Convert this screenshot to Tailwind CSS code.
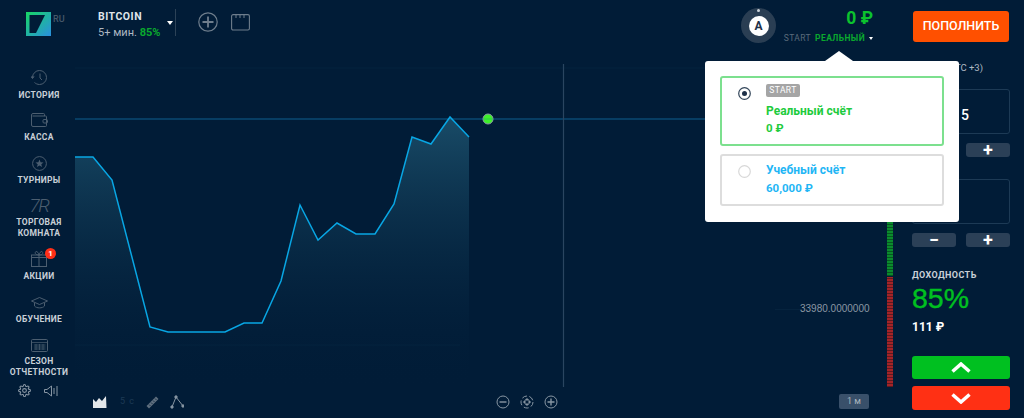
<!DOCTYPE html>
<html lang="en">
<head>
  <meta charset="UTF-8">
  <title>Binomo</title>
  <script src="https://cdn.jsdelivr.net/npm/@tailwindcss/browser@4"></script>
</head>
<body class="bg-[#011c37] font-['Roboto','Noto_Sans',sans-serif] overflow-hidden">
  <div class="relative w-[1024px] h-[418px] flex flex-col text-[#d5dbe1]">

    <!-- top bar -->
    <header class="h-[60px] flex items-start shrink-0">
      <div class="w-[98px] pl-[26px] pt-[12px] flex items-start shrink-0">
        <svg width="25" height="24" viewBox="0 0 25 24">
          <defs><linearGradient id="logo" x1="0" y1="0" x2="1" y2="1"><stop offset="0" stop-color="#17d764"/><stop offset="1" stop-color="#2a8fe0"/></linearGradient></defs>
          <rect width="25" height="24" fill="url(#logo)"/>
          <path d="M3.500 3H19L10 21H3.500Z" fill="#011c37"/>
        </svg>
        <span class="ml-[2px] mt-[1px] text-[9px] font-medium text-[#46586a]">RU</span>
      </div>
      <div class="w-[69px] pt-[9px] shrink-0">
        <div class="text-[10.5px] font-bold tracking-[0.5px] leading-[15px] text-[#dfe4e9]">BITCOIN</div>
        <div class="text-[11px] leading-[17px] whitespace-nowrap text-[#aeb8c2]">5+ мин. <span class="font-bold text-[#0aa82e]">85%</span></div>
      </div>
      <div class="w-[6px] mt-[21px] h-0 border-x-[3px] border-t-[4px] border-x-transparent border-t-white shrink-0"></div>
      <div class="ml-[2px] mt-[9px] w-[1px] h-[27px] bg-[#2c4257] shrink-0"></div>
      <svg class="ml-[22px] mt-[12px] shrink-0" width="20" height="20" viewBox="0 0 20 20" fill="none" stroke="#6e7d8c">
        <circle cx="10" cy="10" r="9.200" stroke-width="1.200"/>
        <path d="M10 4.500V15.500M4.500 10H15.500" stroke-width="1.800"/>
      </svg>
      <svg class="ml-[13px] mt-[14px] shrink-0" width="19" height="17" viewBox="0 0 19 17" fill="none" stroke="#6e7d8c">
        <rect x=".6" y=".6" width="17.800" height="15.400" rx="1.500" stroke-width="1.100"/>
        <path d="M5 1V4M9 1V4M13 1V4" stroke-width="1"/>
      </svg>
      <div class="flex-1"></div>
      <div class="relative w-[35px] h-[35px] mt-[8px] rounded-full bg-[#2a3e53] flex items-center justify-center shrink-0">
        <span class="absolute top-[1px] left-[16px] w-[3px] h-[3px] rounded-full bg-[#cfd6dc]"></span>
        <span class="w-[20px] h-[20px] rounded-full bg-white flex items-center justify-center text-[12px] font-bold text-[#1d3048]">A</span>
      </div>
      <div class="w-[90px] ml-[6px] pt-[7px] shrink-0 text-right">
        <div class="text-[17.500px] leading-[22px] font-bold text-[#0cc22e] -mr-[1px]">0 ₽</div>
        <div class="mt-[3px] flex items-center justify-end text-[8.5px] leading-[12px] tracking-[0.4px] whitespace-nowrap">
          <span class="text-[#5a6b7b]">START</span>
          <span class="ml-[4px] font-bold text-[#0aa82e]">РЕАЛЬНЫЙ</span>
          <span class="ml-[4px] mr-[-1px] w-0 h-0 border-x-[2px] border-t-[3px] border-x-transparent border-t-white"></span>
        </div>
      </div>
      <button class="ml-[41px] mr-[15px] mt-[11px] w-[96px] h-[31px] rounded-[3px] bg-[#ff5000] text-white text-[12.5px] font-medium shrink-0">ПОПОЛНИТЬ</button>
    </header>

    <main class="flex-1 flex min-h-0">
      <!-- left menu -->
      <aside class="w-[75px] pl-[3px] shrink-0 flex flex-col items-center text-[8.5px] font-bold tracking-[0.3px] leading-[11px] text-center text-[#c9d0d7]">
        <svg class="mt-[9px]" width="17" height="17" viewBox="0 0 17 17" fill="none" stroke="#4c5e70" stroke-width="1">
          <path d="M1.500 8.500A7 7 0 1 1 8.500 15.500C6.500 15.500 4.500 14.500 3.500 13.500"/><path d="M9 4.500V9L11 11"/><path d="M0 7.500L1.500 9.500L3 7.500" fill="#4c5e70"/>
        </svg>
        <div class="mt-[4px]">ИСТОРИЯ</div>
        <svg class="mt-[12px]" width="17" height="14" viewBox="0 0 17 14" fill="none" stroke="#4c5e70" stroke-width="1">
          <path d="M13.500 3V1.500Q13.500 .5 12.500 .5H2Q.5 .5 .5 2V12Q.5 13.500 2 13.500H14.500Q15.500 13.500 15.500 12.500V3.500Q15.500 3 14.500 3H1.500"/><rect x="12" y="6.500" width="4.500" height="3.500" rx="1"/>
        </svg>
        <div class="mt-[5px]">КАССА</div>
        <svg class="mt-[13px]" width="15" height="15" viewBox="0 0 15 15" fill="none">
          <circle cx="7.500" cy="7.500" r="6.900" stroke="#4c5e70"/>
          <path d="M7.500 3.500L8.600 6.200L11.500 6.400L9.300 8.300L10 11.100L7.500 9.600L5 11.100L5.700 8.300L3.500 6.400L6.400 6.200Z" fill="#4c5e70"/>
        </svg>
        <div class="mt-[4px]">ТУРНИРЫ</div>
        <div class="mt-[12px] text-[19px] leading-[15px] font-light italic tracking-[-1.500px] text-[#4c5e70]">7R</div>
        <div class="mt-[4px]">ТОРГОВАЯ<br>КОМНАТА</div>
        <div class="relative mt-[14px] h-[15px]">
          <svg width="16" height="17" viewBox="0 0 16 17" fill="none" stroke="#4c5e70" stroke-width="1" class="-mt-[3px]">
            <rect x=".5" y="5" width="15" height="11.500"/><path d="M0 7.500H16M8 5V17M8 5C5 5 3.500 3.500 4.500 2S7.500 2.500 8 5C8.500 2.500 10.500 .5 11.500 2S11 5 8 5"/>
          </svg>
          <span class="absolute -top-[5px] left-[14px] w-[11px] h-[11px] rounded-full bg-[#ff2f17] text-white text-[8px] leading-[11px] font-bold tracking-normal">1</span>
        </div>
        <div class="mt-[3px]">АКЦИИ</div>
        <svg class="mt-[15px]" width="17" height="12" viewBox="0 0 17 12" fill="none" stroke="#4c5e70" stroke-width="1">
          <path d="M.5 4L8.500 .5L16.500 4L8.500 7.500Z"/><path d="M3.500 6V9C5.500 11.500 11.500 11.500 13.500 9V6"/>
        </svg>
        <div class="mt-[5px]">ОБУЧЕНИЕ</div>
        <svg class="mt-[14px]" width="17" height="13" viewBox="0 0 17 13" fill="none" stroke="#4c5e70" stroke-width="1">
          <rect x=".5" y=".5" width="16" height="12" rx="1"/><path d="M.5 3.500H16.500M3 6H14.500M3 8H14.500M3 10H14.500M5 5V11M8.500 5V11M12 5V11" stroke-width=".7"/>
        </svg>
        <div class="mt-[4px]">СЕЗОН<br>ОТЧЕТНОСТИ</div>
        <div class="mt-[6px] -ml-[3px] flex items-center gap-[13px]">
          <svg width="13" height="13" viewBox="0 0 24 24" fill="none" stroke="#8795a3" stroke-width="2">
            <circle cx="12" cy="12" r="3.500"/><path d="M19.400 15a1.650 1.650 0 0 0 .33 1.820l.06.06a2 2 0 1 1-2.830 2.830l-.06-.06a1.650 1.650 0 0 0-2.800 1.170V21a2 2 0 1 1-4 0v-.09a1.650 1.650 0 0 0-2.800-1.170l-.06.06a2 2 0 1 1-2.830-2.830l.06-.06a1.650 1.650 0 0 0-1.170-2.800H3a2 2 0 1 1 0-4h.09a1.650 1.650 0 0 0 1.170-2.800l-.06-.06a2 2 0 1 1 2.830-2.830l.06.06a1.650 1.650 0 0 0 2.800-1.170V3a2 2 0 1 1 4 0v.09a1.650 1.650 0 0 0 2.800 1.170l.06-.06a2 2 0 1 1 2.830 2.830l-.06.06a1.650 1.650 0 0 0 1.170 2.800H21a2 2 0 1 1 0 4h-.09a1.650 1.650 0 0 0-1.510 1z"/>
          </svg>
          <svg width="14" height="12" viewBox="0 0 14 12" fill="none" stroke="#8795a3" stroke-width="1">
            <path d="M.5 4.500V7.500H3L7.500 11V1L3 4.500Z"/><path d="M10 3V9M13 1V11"/>
          </svg>
        </div>
      </aside>

      <!-- chart canvas -->
      <section class="relative flex-1 min-w-0">
        <svg class="absolute inset-0" width="830" height="358" viewBox="75 60 830 358" fill="none">
          <defs>
            <linearGradient id="area" x1="0" y1="0" x2="0" y2="1"><stop offset="0" stop-color="#1d5470" stop-opacity=".85"/><stop offset="1" stop-color="#011c37" stop-opacity="0"/></linearGradient>
            <pattern id="volGreen" width="6" height="3" patternUnits="userSpaceOnUse"><rect width="6" height="2" fill="#0b8a2e"/></pattern>
            <pattern id="volRed" width="6" height="3" patternUnits="userSpaceOnUse"><rect width="6" height="2" fill="#a32428"/></pattern>
          </defs>
          <path d="M75 68H895M75 345H460" stroke="#05233f" stroke-width="1"/>
          <path d="M75 157H93L112 180L150 327L168 332H225L244 323H262L281 281L300 205L318 240L337 223L356 234H375L394 204L412 137L431 144L450 117L469 137V388H75Z" fill="url(#area)"/>
          <path d="M75 119H895" stroke="#0e5f90" stroke-width="1.200"/>
          <path d="M563.500 64V387" stroke="#2a4560" stroke-width="1.200"/>
          <path d="M75 157H93L112 180L150 327L168 332H225L244 323H262L281 281L300 205L318 240L337 223L356 234H375L394 204L412 137L431 144L450 117L469 137" stroke="#08a6e4" stroke-width="1.500"/>
          <circle cx="488" cy="119" r="5" fill="#3df02a" stroke="#8d9ba5" stroke-width="1"/>
          <path d="M483 119H493" stroke="#2fc84a"/>
          <path d="M775 309.500H870" stroke="#06233e"/>
          <rect x="887" y="222" width="6" height="54" fill="#07561f"/>
          <rect x="887" y="222" width="6" height="54" fill="url(#volGreen)"/>
          <rect x="887" y="277" width="6" height="110" fill="#5e1a20"/>
          <rect x="887" y="277" width="6" height="110" fill="url(#volRed)"/>
        </svg>
        <span class="absolute left-[725px] top-[243px] text-[10px] leading-[12px] font-['Liberation_Sans',sans-serif] text-[#8a97a3] bg-[#011c37]">33980.0000000</span>

        <!-- bottom tools -->
        <div class="absolute left-[18px] bottom-[9px] flex items-center">
          <svg width="14" height="12" viewBox="0 0 14 12"><path d="M0 12V3L3 6L6 2L9 5L13 0L13.500 12Z" fill="#e3e7ea"/></svg>
          <span class="ml-[13px] text-[9px] tracking-[1px] text-[#1d3a55]">5 с</span>
          <svg class="ml-[11px]" width="13" height="13" viewBox="0 0 13 13" fill="#5f6f7f"><path d="M.5 10L10 .5L12.500 3L3 12.500Z"/><path d="M3 8.500L4.500 10M5 6.500L6.500 8M7 4.500L8.500 6M9 2.500L10.500 4" stroke="#011c37" stroke-width=".7"/></svg>
          <svg class="ml-[11px]" width="14" height="14" viewBox="0 0 14 14" fill="none" stroke="#8896a3" stroke-width="1"><path d="M2 12L6 2L13 11"/><circle cx="6" cy="2" r="1.200" fill="#8896a3"/><circle cx="2" cy="12" r="1.200" fill="#8896a3"/><circle cx="13" cy="11" r="1.200" fill="#8896a3"/></svg>
        </div>
        <div class="absolute left-[421px] bottom-[9px] flex items-center gap-[10px]">
          <svg width="14" height="14" viewBox="0 0 14 14" fill="none" stroke="#8896a3"><circle cx="7" cy="7" r="6"/><path d="M3.500 7H10.500" stroke-width="1.400"/></svg>
          <svg width="14" height="14" viewBox="0 0 14 14" fill="none" stroke="#8896a3"><circle cx="7" cy="7" r="6" stroke-dasharray="5 2.500"/><path d="M7 3.500L8.500 5H5.500ZM7 10.500L8.500 9H5.500ZM3.500 7L5 5.500V8.500ZM10.500 7L9 5.500V8.500Z" fill="#8896a3"/></svg>
          <svg width="14" height="14" viewBox="0 0 14 14" fill="none" stroke="#8896a3"><circle cx="7" cy="7" r="6"/><path d="M3.500 7H10.500M7 3.500V10.500" stroke-width="1.400"/></svg>
        </div>
        <div class="absolute left-[764px] bottom-[9px] w-[30px] h-[15px] rounded-[2px] bg-[#39506a] text-[9px] leading-[15px] text-center text-[#aab5bf]">1 м</div>
      </section>

      <!-- right panel -->
      <aside class="w-[114px] pr-[14px] pl-[2px] shrink-0 flex flex-col text-white">
        <div class="mt-[2px] h-[12px] text-[9.5px] leading-[12px] text-[#aeb8c2] text-right pr-[27px]">(UTC +3)</div>
        <div class="mt-[15px] h-[45px] pt-[8px] rounded-[3px] border border-[#1d3a55] flex items-center justify-center text-[14px] font-medium">15</div>
        <div class="mt-[9px] flex justify-between">
          <button class="w-[44px] h-[14px] rounded-[3px] bg-[#2b4057] text-[18px] leading-[14px] font-bold">−</button>
          <button class="w-[44px] h-[14px] rounded-[3px] bg-[#2b4057] text-[18px] leading-[14px] font-bold">+</button>
        </div>
        <div class="mt-[22px] h-[45px] rounded-[3px] border border-[#1d3a55]"></div>
        <div class="mt-[9px] flex justify-between">
          <button class="w-[44px] h-[14px] rounded-[3px] bg-[#2b4057] text-[18px] leading-[14px] font-bold">−</button>
          <button class="w-[44px] h-[14px] rounded-[3px] bg-[#2b4057] text-[18px] leading-[14px] font-bold">+</button>
        </div>
        <div class="mt-[22px] text-[9px] leading-[12px] font-bold tracking-[0.4px] text-[#c9d0d7]">ДОХОДНОСТЬ</div>
        <div class="mt-[3px] text-[28.500px] leading-[28px] font-['Liberation_Sans',sans-serif] text-[#00c020] [-webkit-text-stroke:0.4px_#00c020]">85%</div>
        <div class="mt-[8px] text-[12px] leading-[15px] font-bold">111 ₽</div>
        <button class="mt-[21px] h-[23px] rounded-[3px] bg-[#00c020] flex items-center justify-center">
          <svg width="20" height="11" viewBox="0 0 20 11" fill="none" stroke="#fff" stroke-width="3.500"><path d="M1.500 9.500L10 2L18.500 9.500"/></svg>
        </button>
        <button class="mt-[7px] h-[24px] rounded-[3px] bg-[#ff3014] flex items-center justify-center">
          <svg width="20" height="11" viewBox="0 0 20 11" fill="none" stroke="#fff" stroke-width="3.500"><path d="M1.500 1.500L10 9L18.500 1.500"/></svg>
        </button>
      </aside>
    </main>

    <!-- account dropdown -->
    <div class="absolute left-[705px] top-[61px] w-[254px] h-[161px] bg-white rounded-[3px] p-[15px] flex flex-col gap-[8px]">
      <div class="absolute -top-[10px] left-[120px] w-0 h-0 border-x-[14px] border-b-[10px] border-x-transparent border-b-white"></div>
      <div class="h-[70px] rounded-[3px] border-2 border-[#7ce08e] flex pl-[16px] pt-[6px]">
        <svg class="mt-[3px] shrink-0" width="13" height="13" viewBox="0 0 13 13"><circle cx="6.500" cy="6.500" r="5.800" fill="none" stroke="#33465a" stroke-width="1.200"/><circle cx="6.500" cy="6.500" r="2.500" fill="#1d3048"/></svg>
        <div class="ml-[15px]">
          <span class="block w-[34px] h-[13px] rounded-[2px] bg-[#a5a5a5] text-white text-[8.5px] leading-[13px] text-center tracking-[0.4px]">START</span>
          <div class="mt-[6px] text-[12px] leading-[16px] font-bold text-[#1ecb3d]">Реальный счёт</div>
          <div class="mt-[1px] text-[11.500px] leading-[16px] font-bold text-[#1ecb3d]">0 ₽</div>
        </div>
      </div>
      <div class="h-[52px] rounded-[3px] border-2 border-[#dddddd] flex pl-[16px] pt-[6px]">
        <svg class="mt-[3px] shrink-0" width="13" height="13" viewBox="0 0 13 13"><circle cx="6.500" cy="6.500" r="5.800" fill="none" stroke="#d8d8d8" stroke-width="1.200"/></svg>
        <div class="ml-[15px]">
          <div class="text-[12px] leading-[16px] font-bold text-[#1fb6f5]">Учебный счёт</div>
          <div class="mt-[2px] text-[11.500px] leading-[16px] font-bold text-[#1fb6f5]">60,000 ₽</div>
        </div>
      </div>
    </div>
  </div>
</body>
</html>
